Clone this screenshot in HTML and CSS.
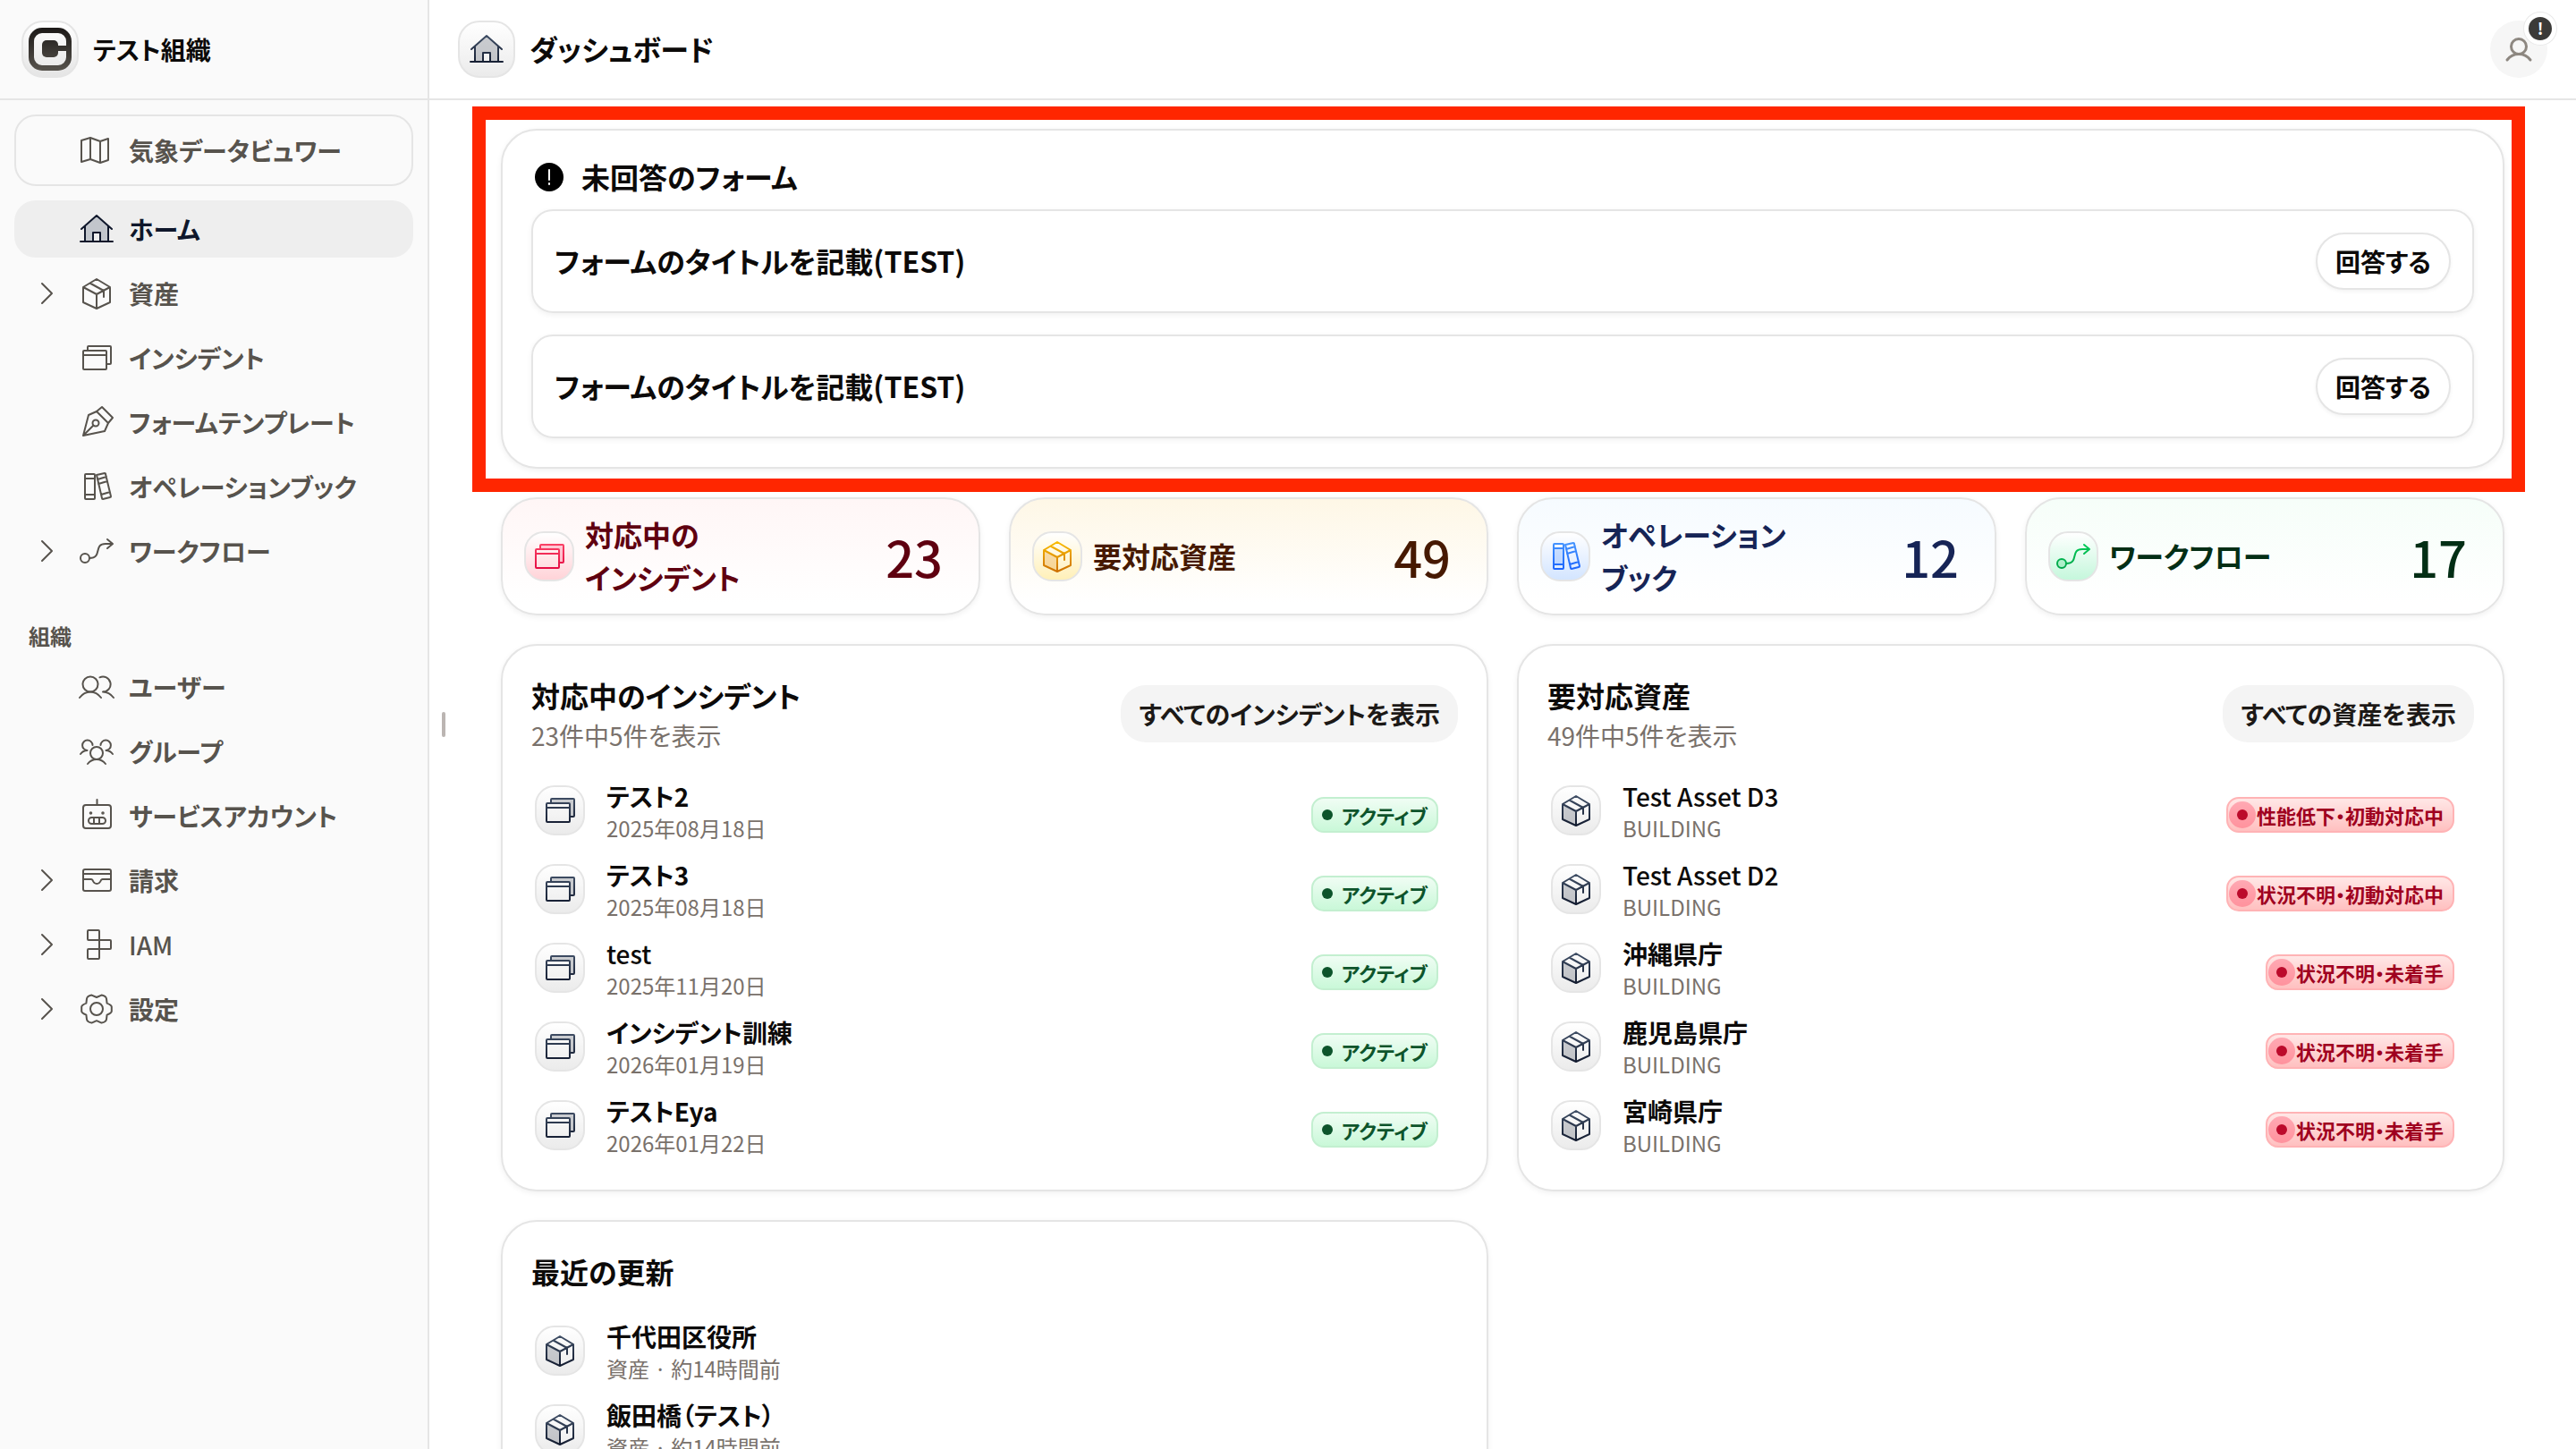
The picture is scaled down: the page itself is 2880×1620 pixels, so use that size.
FILE: index.html
```html
<!DOCTYPE html>
<html lang="ja">
<head>
  <meta charset="UTF-8">
  <meta name="viewport" content="width=device-width, initial-scale=1.0">
  <title>ダッシュボード</title>
  <link rel="stylesheet" href="styles.css">
</head>
<body>
  <!-- icon sprite -->
  <svg class="sprite" aria-hidden="true">
    <defs>
      <linearGradient id="grad-logo" gradientUnits="userSpaceOnUse" x1="0" y1="0" x2="0" y2="48"><stop offset="0" stop-color="#1c1917"/><stop offset="1" stop-color="#57534d"/></linearGradient>
      <linearGradient id="grad-dark" gradientUnits="userSpaceOnUse" x1="0" y1="0" x2="0" y2="40"><stop offset="0" stop-color="#45556c"/><stop offset="1" stop-color="#0f172b"/></linearGradient>
      <linearGradient id="grad-red" gradientUnits="userSpaceOnUse" x1="0" y1="0" x2="0" y2="40"><stop offset="0" stop-color="#ff4d6d"/><stop offset="1" stop-color="#e0003c"/></linearGradient>
      <linearGradient id="grad-amber" gradientUnits="userSpaceOnUse" x1="0" y1="0" x2="0" y2="40"><stop offset="0" stop-color="#ffc400"/><stop offset="1" stop-color="#c96a00"/></linearGradient>
      <linearGradient id="grad-blue" gradientUnits="userSpaceOnUse" x1="0" y1="0" x2="0" y2="40"><stop offset="0" stop-color="#4a9bff"/><stop offset="1" stop-color="#155dfc"/></linearGradient>
      <linearGradient id="grad-green" gradientUnits="userSpaceOnUse" x1="0" y1="0" x2="0" y2="40"><stop offset="0" stop-color="#00d45a"/><stop offset="1" stop-color="#009a45"/></linearGradient>
    </defs>
    <symbol id="chevron" viewBox="0 0 40 40"><path d="M15 9l11 11-11 11"/></symbol>
    <symbol id="map" viewBox="0 0 40 40"><path d="M3 9l10-3 11 4 9-3v24l-9 3-11-4-10 3zM13 6v24M24 10v24"/></symbol>
    <symbol id="home" viewBox="0 0 40 40"><path class="face" stroke="none" d="M7 17L20 5l13 12v17h-9V24h-8v10H7z"/><path d="M3 20L20 5l17 15M7 17v17M33 17v17M2 34h36M16 34V24h8v10"/></symbol>
    <symbol id="box" viewBox="0 0 40 40"><path class="face" stroke="none" d="M5 13l15 8v15L5 30z"/><path d="M20 4l15 9v17l-15 7-15-7V13zM5 13l15 8 15-8M20 21v16M12.500 8.500L28 17v7"/></symbol>
    <symbol id="windows" viewBox="0 0 40 40"><path class="face" stroke="none" d="M10 12V7h26v20h-5V12z"/><path d="M10 12V8q0-1 1-1h24q1 0 1 1v18q0 1-1 1h-4"/><rect x="5" y="12" width="26" height="21" rx="1"/><path d="M5 17h26"/></symbol>
    <symbol id="pen" viewBox="0 0 40 40"><path d="M5 35l6-23 9-4 6-5 12 12-5 6-4 9zM20 8l13 13M5 35l11.500-11.500"/><circle cx="19" cy="21" r="3.500"/></symbol>
    <symbol id="books" viewBox="0 0 40 40"><path class="face" stroke="none" d="M7 11h11v18H7z"/><rect x="7" y="6" width="11" height="28" rx="1"/><path d="M7 11h11M7 29h11M20 7l9-2q1 0 1 1l6 25q0 1-1 1l-8 2q-1 0-1-1zM21 12l10-3M22 17l10-3M25 29l10-3"/></symbol>
    <symbol id="flow" viewBox="0 0 40 40"><circle class="face" cx="7" cy="28" r="5"/><path d="M12 28C27 28 16 12 30 12h7M32 7l6 5-6 5"/></symbol>
    <symbol id="users" viewBox="0 0 40 40"><circle cx="13" cy="17" r="8.500"/><path d="M1 32q5-6.500 12-6.500T25 32M23.500 9.300A8.500 8.500 0 1 1 27 25.500q7 0 12 6.500"/></symbol>
    <symbol id="group" viewBox="0 0 40 40"><circle cx="20" cy="22" r="7"/><path d="M10 34q4-5 10-5t10 5M15.500 13a5.700 5.700 0 1 0-6 6Q5 19 2 23M24.500 13a5.700 5.700 0 1 1 6 6q4.500 0 7.500 4"/></symbol>
    <symbol id="robot" viewBox="0 0 40 40"><rect x="5" y="8" width="31" height="26" rx="3"/><path d="M20.500 2v6M17 22v7M23 22v7"/><rect x="11" y="22" width="19" height="7" rx="3.500"/><circle cx="13.500" cy="17" r=".8"/><circle cx="27" cy="17" r=".8"/></symbol>
    <symbol id="inbox" viewBox="0 0 40 40"><rect x="5" y="8" width="31" height="24" rx="2"/><path d="M5 13h31M5 19h9q1 0 1.500 1 1.500 4 4.700 4t4.800-4q.5-1 1.500-1H36"/></symbol>
    <symbol id="iam" viewBox="0 0 40 40"><rect x="10" y="4" width="13" height="11" rx="1"/><rect x="10" y="25" width="13" height="11" rx="1"/><path d="M23 15h12q1 0 1 1v8q0 1-1 1H23zM23 15v10"/></symbol>
    <symbol id="gear" viewBox="0 0 40 40"><circle cx="20" cy="20" r="7"/><path d="M20 7l5.500-2.400q5 1 5.500 4l.6 5q5 2 5.200 4v5q-.2 2-5.200 4l-.6 5q-.5 3-5.500 4L20 33.200l-5.500 2.400q-5-1-5.500-4l-.6-5q-5-2-5.200-4v-5q.2-2 5.200-4l.6-5q.5-3 5.500-4z"/></symbol>
    <symbol id="person" viewBox="0 0 40 40"><circle cx="20" cy="17" r="8.500"/><path d="M7 32q5-6.500 13-6.500T33 32"/></symbol>
  </svg>

  <div class="app">
    <aside class="sidebar">
      <div class="org">
        <span class="org-logo">
          <svg viewBox="0 0 48 48"><rect x="3" y="3" width="42" height="42" rx="12" fill="none" stroke="url(#grad-logo)" stroke-width="6"/><rect x="15" y="14" width="18" height="19" rx="5" fill="url(#grad-logo)"/><path d="M28 20h17v6H28z" fill="url(#grad-logo)"/></svg>
        </span>
        <span class="org-name">テスト組織</span>
      </div>
      <nav class="nav">
        <a class="nav-item nav-map" href="#"><span class="nav-toggle"></span><svg class="icon"><use href="#map"/></svg>気象データビュワー</a>
        <ul class="nav-list">
          <li><a class="nav-item active" href="#"><span class="nav-toggle"></span><svg class="icon"><use href="#home"/></svg>ホーム</a></li>
          <li><a class="nav-item" href="#"><svg class="nav-toggle icon"><use href="#chevron"/></svg><svg class="icon"><use href="#box"/></svg>資産</a></li>
          <li><a class="nav-item" href="#"><span class="nav-toggle"></span><svg class="icon"><use href="#windows"/></svg>インシデント</a></li>
          <li><a class="nav-item" href="#"><span class="nav-toggle"></span><svg class="icon"><use href="#pen"/></svg>フォームテンプレート</a></li>
          <li><a class="nav-item" href="#"><span class="nav-toggle"></span><svg class="icon"><use href="#books"/></svg>オペレーションブック</a></li>
          <li><a class="nav-item" href="#"><svg class="nav-toggle icon"><use href="#chevron"/></svg><svg class="icon"><use href="#flow"/></svg>ワークフロー</a></li>
        </ul>
        <div class="nav-label">組織</div>
        <ul class="nav-list">
          <li><a class="nav-item" href="#"><span class="nav-toggle"></span><svg class="icon"><use href="#users"/></svg>ユーザー</a></li>
          <li><a class="nav-item" href="#"><span class="nav-toggle"></span><svg class="icon"><use href="#group"/></svg>グループ</a></li>
          <li><a class="nav-item" href="#"><span class="nav-toggle"></span><svg class="icon"><use href="#robot"/></svg>サービスアカウント</a></li>
          <li><a class="nav-item" href="#"><svg class="nav-toggle icon"><use href="#chevron"/></svg><svg class="icon"><use href="#inbox"/></svg>請求</a></li>
          <li><a class="nav-item" href="#" lang="en"><svg class="nav-toggle icon"><use href="#chevron"/></svg><svg class="icon"><use href="#iam"/></svg>IAM</a></li>
          <li><a class="nav-item" href="#"><svg class="nav-toggle icon"><use href="#chevron"/></svg><svg class="icon"><use href="#gear"/></svg>設定</a></li>
        </ul>
      </nav>
    </aside>

    <div class="main">
      <div class="resize-handle"></div>
      <header class="topbar">
        <span class="tile tile-lg"><svg class="icon" stroke="url(#grad-dark)"><use href="#home"/></svg></span>
        <h1>ダッシュボード</h1>
        <button class="avatar" type="button" aria-label="アカウント">
          <svg class="icon"><use href="#person"/></svg>
          <span class="avatar-badge">!</span>
        </button>
      </header>

      <main class="content">
        <section class="card forms">
          <h2 class="forms-title">
            <svg class="alert" viewBox="0 0 40 40"><circle cx="20" cy="20" r="16"/><path d="M20 12v11M20 27v1"/></svg>
            <span>未回答のフォーム</span>
          </h2>
          <div class="form-row"><span>フォームのタイトルを記載(TEST)</span><button class="btn-outline" type="button">回答する</button></div>
          <div class="form-row"><span>フォームのタイトルを記載(TEST)</span><button class="btn-outline" type="button">回答する</button></div>
          <div class="highlight"></div>
        </section>

        <section class="stats">
          <a class="card stat stat-red" href="#">
            <span class="tile"><svg class="icon" stroke="url(#grad-red)"><use href="#windows"/></svg></span>
            <span class="stat-name">対応中の<br>インシデント</span><span class="stat-value">23</span>
          </a>
          <a class="card stat stat-amber" href="#">
            <span class="tile"><svg class="icon" stroke="url(#grad-amber)"><use href="#box"/></svg></span>
            <span class="stat-name">要対応資産</span><span class="stat-value">49</span>
          </a>
          <a class="card stat stat-blue" href="#">
            <span class="tile"><svg class="icon" stroke="url(#grad-blue)"><use href="#books"/></svg></span>
            <span class="stat-name">オペレーション<br>ブック</span><span class="stat-value">12</span>
          </a>
          <a class="card stat stat-green" href="#">
            <span class="tile"><svg class="icon" stroke="url(#grad-green)"><use href="#flow"/></svg></span>
            <span class="stat-name">ワークフロー</span><span class="stat-value">17</span>
          </a>
        </section>

        <section class="panels">
          <div class="card panel">
            <div class="panel-head">
              <div><h2>対応中のインシデント</h2><p>23件中5件を表示</p></div>
              <button class="btn-soft" type="button">すべてのインシデントを表示</button>
            </div>
            <ul class="rows">
              <li class="row"><span class="tile"><svg class="icon" stroke="url(#grad-dark)"><use href="#windows"/></svg></span><div class="row-text"><b>テスト2</b><small>2025年08月18日</small></div><span class="status status-ok">アクティブ</span></li>
              <li class="row"><span class="tile"><svg class="icon" stroke="url(#grad-dark)"><use href="#windows"/></svg></span><div class="row-text"><b>テスト3</b><small>2025年08月18日</small></div><span class="status status-ok">アクティブ</span></li>
              <li class="row"><span class="tile"><svg class="icon" stroke="url(#grad-dark)"><use href="#windows"/></svg></span><div class="row-text"><b lang="en">test</b><small>2025年11月20日</small></div><span class="status status-ok">アクティブ</span></li>
              <li class="row"><span class="tile"><svg class="icon" stroke="url(#grad-dark)"><use href="#windows"/></svg></span><div class="row-text"><b>インシデント訓練</b><small>2026年01月19日</small></div><span class="status status-ok">アクティブ</span></li>
              <li class="row"><span class="tile"><svg class="icon" stroke="url(#grad-dark)"><use href="#windows"/></svg></span><div class="row-text"><b>テストEya</b><small>2026年01月22日</small></div><span class="status status-ok">アクティブ</span></li>
            </ul>
          </div>

          <div class="card panel">
            <div class="panel-head">
              <div><h2>要対応資産</h2><p>49件中5件を表示</p></div>
              <button class="btn-soft" type="button">すべての資産を表示</button>
            </div>
            <ul class="rows">
              <li class="row"><span class="tile"><svg class="icon" stroke="url(#grad-dark)"><use href="#box"/></svg></span><div class="row-text"><b lang="en">Test Asset D3</b><small>BUILDING</small></div><span class="status status-bad">性能低下・初動対応中</span></li>
              <li class="row"><span class="tile"><svg class="icon" stroke="url(#grad-dark)"><use href="#box"/></svg></span><div class="row-text"><b lang="en">Test Asset D2</b><small>BUILDING</small></div><span class="status status-bad">状況不明・初動対応中</span></li>
              <li class="row"><span class="tile"><svg class="icon" stroke="url(#grad-dark)"><use href="#box"/></svg></span><div class="row-text"><b>沖縄県庁</b><small>BUILDING</small></div><span class="status status-bad">状況不明・未着手</span></li>
              <li class="row"><span class="tile"><svg class="icon" stroke="url(#grad-dark)"><use href="#box"/></svg></span><div class="row-text"><b>鹿児島県庁</b><small>BUILDING</small></div><span class="status status-bad">状況不明・未着手</span></li>
              <li class="row"><span class="tile"><svg class="icon" stroke="url(#grad-dark)"><use href="#box"/></svg></span><div class="row-text"><b>宮崎県庁</b><small>BUILDING</small></div><span class="status status-bad">状況不明・未着手</span></li>
            </ul>
          </div>

          <div class="card panel">
            <div class="panel-head"><h2>最近の更新</h2></div>
            <ul class="rows">
              <li class="row"><span class="tile"><svg class="icon" stroke="url(#grad-dark)"><use href="#box"/></svg></span><div class="row-text"><b>千代田区役所</b><small>資産 · 約14時間前</small></div></li>
              <li class="row"><span class="tile"><svg class="icon" stroke="url(#grad-dark)"><use href="#box"/></svg></span><div class="row-text"><b>飯田橋（テスト）</b><small>資産 · 約14時間前</small></div></li>
            </ul>
          </div>
        </section>
      </main>
    </div>
  </div>
</body>
</html>
```
FILE: styles.css
```css
* {
  box-sizing: border-box;
}
body {
  margin: 0;
  font-family: "Noto Sans CJK JP", Roboto, sans-serif;
  font-feature-settings: "palt";
  font-size: 28px;
  line-height: 40px;
  color: #0c0a09;
  background-color: #fff;
}
h1, h2, p, ul {
  margin: 0;
  padding: 0;
}
ul {
  list-style: none;
}
a {
  color: inherit;
  text-decoration: none;
}
button {
  font: inherit;
  font-feature-settings: inherit;
  color: inherit;
  cursor: pointer;
}
h1, h2 {
  padding-bottom: 2px;
  font-size: 32px;
  line-height: 46px;
  font-weight: 600;
}
.sprite {
  position: absolute;
  width: 0;
  height: 0;
}
.icon {
  width: 40px;
  height: 40px;
  flex: none;
  fill: none;
  stroke-width: 2;
  stroke-linecap: round;
  stroke-linejoin: round;
}
.face {
  fill: var(--face, none);
}

.app {
  display: flex;
  height: 100vh;
  overflow: hidden;
}

/* Sidebar */
.sidebar {
  width: 480px;
  flex: none;
  background-color: #fafafa;
  border-right: 2px solid #e5e5e5;
}
.org {
  display: flex;
  align-items: center;
  gap: 16px;
  height: 112px;
  padding: 0 24px;
  border-bottom: 2px solid #e5e5e5;
}
.org-logo {
  display: flex;
  width: 64px;
  height: 64px;
  padding: 6px;
  border: 2px solid #e5e5e5;
  border-radius: 24px;
  background: linear-gradient(#fff, #e5e5e5);
}
.org-name {
  font-weight: 600;
}
.nav {
  padding: 16px;
}
.nav-list {
  display: flex;
  flex-direction: column;
  gap: 8px;
}
.nav-item {
  display: flex;
  align-items: center;
  gap: 16px;
  height: 64px;
  padding: 0 16px;
  border-radius: 24px;
  font-weight: 600;
  color: #57534d;
}
.nav-item:lang(en) {
  font-weight: 500;
}
.nav-item .icon {
  stroke: currentColor;
}
.nav-toggle {
  width: 40px;
}
.nav-item.active {
  background-color: #eee;
  color: #0f172b;
  --face: #c2c6cc;
}
.nav-map {
  height: 80px;
  margin-bottom: 16px;
  padding: 0 14px;
  border: 2px solid #e5e5e5;
}
.nav-label {
  margin-top: 40px;
  height: 48px;
  line-height: 46px;
  padding-left: 16px;
  font-size: 24px;
  font-weight: 600;
  color: #57534d;
}

/* Main column */
.main {
  position: relative;
  flex: 1;
  min-width: 0;
}
.resize-handle {
  position: absolute;
  left: 14px;
  top: calc(50% - 14px);
  width: 4px;
  height: 28px;
  border-radius: 2px;
  background-color: #bbb5b2;
}
.topbar {
  display: flex;
  align-items: center;
  gap: 16px;
  height: 112px;
  padding: 0 32px;
  border-bottom: 2px solid #e5e5e5;
}
.tile {
  display: flex;
  align-items: center;
  justify-content: center;
  flex: none;
  width: 56px;
  height: 56px;
  border: 2px solid #e5e5e5;
  border-radius: 22px;
  background: linear-gradient(#fff, #ebebeb);
  --face: #0f172b33;
}
.tile-lg {
  width: 64px;
  height: 64px;
  border-radius: 24px;
}
.avatar {
  position: relative;
  display: flex;
  align-items: center;
  justify-content: center;
  width: 64px;
  height: 64px;
  margin-left: auto;
  padding: 0;
  border: none;
  border-radius: 32px;
  background-color: #f6f6f6;
}
.avatar .icon {
  stroke: #8d8780;
  stroke-width: 3;
}
.avatar-badge {
  position: absolute;
  top: -9px;
  right: -10px;
  width: 36px;
  height: 36px;
  border: 5px solid #fff;
  border-radius: 50%;
  box-shadow: 0 0 0 1px #e9e9e9;
  background-color: #3b3a38;
  color: #fff;
  font-size: 18px;
  line-height: 24px;
  font-weight: 600;
}
.content {
  display: flex;
  flex-direction: column;
  gap: 32px;
  padding: 32px 80px;
}
.card {
  border: 2px solid #e5e5e5;
  border-radius: 40px;
  background-color: #fff;
  box-shadow: 0 2px 6px rgba(0, 0, 0, 0.06);
}

/* Unanswered forms */
.forms {
  position: relative;
  display: flex;
  flex-direction: column;
  gap: 24px;
  padding: 32px;
}
.forms-title {
  display: flex;
  align-items: center;
  gap: 16px;
  height: 40px;
  margin-bottom: -8px;
  padding-bottom: 0;
}
.forms-title span, .form-row span {
  padding-bottom: 2px;
}
.alert {
  width: 40px;
  height: 40px;
}
.alert path {
  stroke: #fff;
  stroke-width: 2;
  stroke-linecap: round;
}
.form-row {
  display: flex;
  align-items: center;
  justify-content: space-between;
  padding: 24px;
  border: 2px solid #e5e5e5;
  border-radius: 24px;
  box-shadow: 0 2px 6px rgba(0, 0, 0, 0.06);
  font-size: 32px;
  font-weight: 600;
}
.btn-outline {
  height: 64px;
  padding: 0 20px;
  border: 2px solid #e5e5e5;
  border-radius: 32px;
  background-color: #fff;
  box-shadow: 0 2px 4px rgba(0, 0, 0, 0.05);
  font-size: 28px;
  font-weight: 600;
}
.highlight {
  position: absolute;
  inset: -27px -25px -28px -34px;
  border: 15px solid #ff2600;
  pointer-events: none;
}

/* Counters */
.stats {
  display: grid;
  grid-template-columns: repeat(4, 1fr);
  gap: 32px;
}
.stat {
  display: flex;
  align-items: center;
  gap: 12px;
  min-height: 132px;
  padding: 12px 40px 12px 24px;
}
.stat-name {
  padding-bottom: 2px;
  font-size: 32px;
  line-height: 48px;
  font-weight: 600;
}
.stat-value {
  margin-left: auto;
  font-size: 56px;
  line-height: 64px;
  font-weight: 500;
}
.stat-red {
  color: #5f0010;
  background: linear-gradient(#fff6f6, #fff 90%);
}
.stat-red .tile {
  background: linear-gradient(#fff, #ffd3d8);
  --face: #ff205633;
}
.stat-amber {
  color: #461901;
  background: linear-gradient(#fef7e6, #fff 90%);
}
.stat-amber .tile {
  background: linear-gradient(#fff, #fff0b8);
  --face: #e17f0040;
}
.stat-blue {
  color: #162456;
  background: linear-gradient(#f6fbff, #fff 90%);
}
.stat-blue .tile {
  background: linear-gradient(#fff, #d3e5ff);
  --face: #2b7fff33;
}
.stat-green {
  color: #032e15;
  background: linear-gradient(#f6fef9, #fff 90%);
}
.stat-green .tile {
  background: linear-gradient(#fff, #c5f7dc);
  --face: #00c95033;
}

/* Panels */
.panels {
  display: grid;
  grid-template-columns: repeat(2, 1fr);
  gap: 32px;
}
.panel {
  padding: 32px;
}
.panel-head {
  display: flex;
  align-items: center;
  justify-content: space-between;
  margin-bottom: 16px;
}
.panel-head p {
  color: #79716b;
}
.btn-soft {
  height: 64px;
  padding: 0 20px;
  border: none;
  border-radius: 28px;
  background-color: #f4f4f4;
  color: #1c1917;
  font-weight: 600;
}
.row {
  display: flex;
  align-items: center;
  gap: 24px;
  height: 88px;
  padding: 12px 22px 4px 4px;
}
.row-text b {
  display: block;
  font-weight: 600;
}
.row-text b:lang(en) {
  font-weight: 500;
}
.row-text small {
  display: block;
  font-size: 24px;
  line-height: 32px;
  color: #79716b;
}
.status {
  position: relative;
  display: flex;
  align-items: center;
  gap: 10px;
  height: 40px;
  margin: 10px 0 0 auto;
  padding: 0 10px;
  border: 2px solid;
  border-radius: 14px;
  font-size: 22px;
  line-height: 32px;
  font-weight: 600;
}
.status::before {
  content: "";
  width: 12px;
  height: 12px;
  border-radius: 50%;
  background-color: currentColor;
}
.status-ok {
  color: #0d542b;
  border-color: #c3efd0;
  background: linear-gradient(#f0fdf4, #c9f8d8);
}
.status-bad {
  color: #9f0020;
  border-color: #ffb3b5;
  background: linear-gradient(#ffe7e6, #ffc0c0);
}
/* pulse ring round the dot */
.status-bad::after {
  content: "";
  position: absolute;
  left: 1px;
  top: 3px;
  width: 30px;
  height: 30px;
  border-radius: 50%;
  background-color: rgba(255, 32, 70, 0.3);
}
```
